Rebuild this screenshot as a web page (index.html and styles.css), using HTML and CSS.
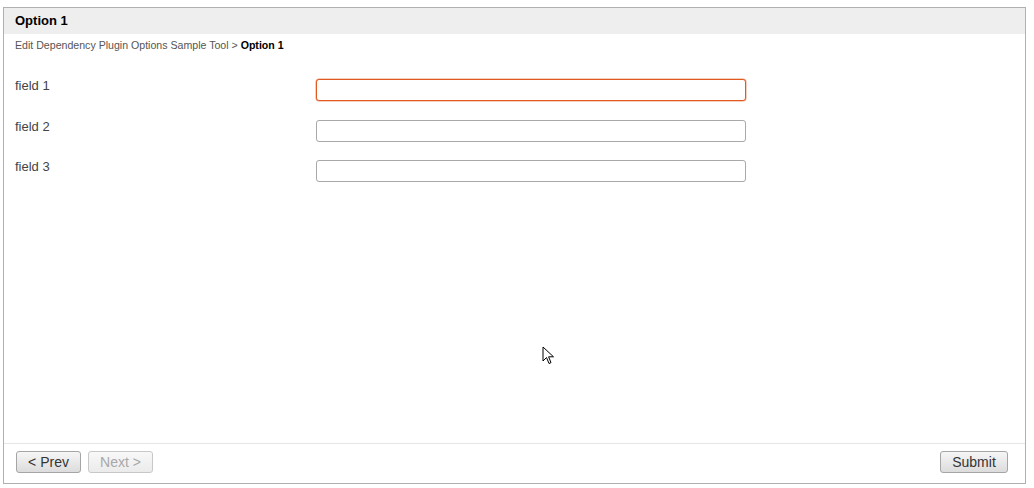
FILE: index.html
```html
<!DOCTYPE html>
<html>
<head>
<meta charset="utf-8">
<link rel="stylesheet" href="styles.css">
</head>
<body>
<div class="panel">
  <div class="header">Option 1</div>
  <div class="crumbs">Edit Dependency Plugin Options Sample Tool &gt; <b>Option 1</b></div>
  <div class="form">
    <div class="row"><label class="lbl">field 1</label><input class="inp focus" type="text" autofocus></div>
    <div class="row"><label class="lbl">field 2</label><input class="inp" type="text"></div>
    <div class="row"><label class="lbl">field 3</label><input class="inp" type="text"></div>
  </div>
  <div class="footer">
    <div class="nav">
      <button class="btn">&lt; Prev</button>
      <button class="btn disabled">Next &gt;</button>
    </div>
    <button class="btn submit">Submit</button>
  </div>
</div>
<svg class="cursor" width="14" height="20" viewBox="0 0 14 20"><path d="M1 1 L1 15 L4.5 11.5 L7 17.5 L9 16.6 L6.6 10.8 L11.5 10.8 Z" fill="#fff" stroke="#000" stroke-width="1" stroke-linejoin="round"/></svg>
</body>
</html>
```
FILE: styles.css
```css
html, body { margin: 0; padding: 0; background: #fff; }
body {
  padding: 7px 8px 4px 3px;
  font-family: "Liberation Sans", Arial, sans-serif;
  color: #333;
}
.panel {
  border: 1px solid #b0b0b0;
  height: 475px;
  display: flex;
  flex-direction: column;
}
.header {
  background: #eeeeee;
  height: 26px;
  line-height: 26px;
  padding-left: 11px;
  font-size: 13px;
  font-weight: bold;
  color: #000;
}
.crumbs {
  font-size: 10.6px;
  color: #555;
  padding: 4px 0 0 11px;
  height: 16px;
  line-height: 14px;
}
.crumbs b { color: #000; }
.form {
  flex: 1;
  padding-top: 25px;
}
.row {
  display: flex;
  align-items: flex-start;
  height: 40.5px;
}
.lbl {
  width: 301px;
  padding-left: 11px;
  font-size: 13px;
  color: #444;
  line-height: 15px;
  margin-top: -1px;
}
.inp {
  width: 430px;
  height: 22px;
  box-sizing: border-box;
  border: 1px solid #a8a8a8;
  border-radius: 3px;
  margin: 0;
  padding: 0 2px;
  font: 13px "Liberation Sans", Arial, sans-serif;
  outline: none;
  caret-color: #222;
}
.inp.focus {
  border-color: #e05a20;
  box-shadow: 0 0 0 0.5px #f0a080;
}
.footer {
  border-top: 1px solid #e6e6e6;
  height: 40px;
  box-sizing: border-box;
  padding: 7px 17px 0 12px;
  display: flex;
  justify-content: space-between;
  align-items: flex-start;
}
.nav { display: flex; gap: 7px; }
.btn {
  height: 22px;
  box-sizing: border-box;
  border: 1px solid #a5a5a5;
  border-radius: 3px;
  background: linear-gradient(#f6f6f6, #dcdcdc);
  font: 14px "Liberation Sans", Arial, sans-serif;
  color: #333;
  padding: 0 8px;
  margin: 0;
  line-height: 19px;
}
.btn:nth-child(1) { width: 65px; }
.btn.disabled {
  width: 65px;
  color: #a8a8a8;
  border-color: #c8c8c8;
  background: linear-gradient(#f8f8f8, #ebebeb);
}
.btn.submit { width: 68px; }
.cursor {
  position: absolute;
  left: 542px;
  top: 346px;
}
```
